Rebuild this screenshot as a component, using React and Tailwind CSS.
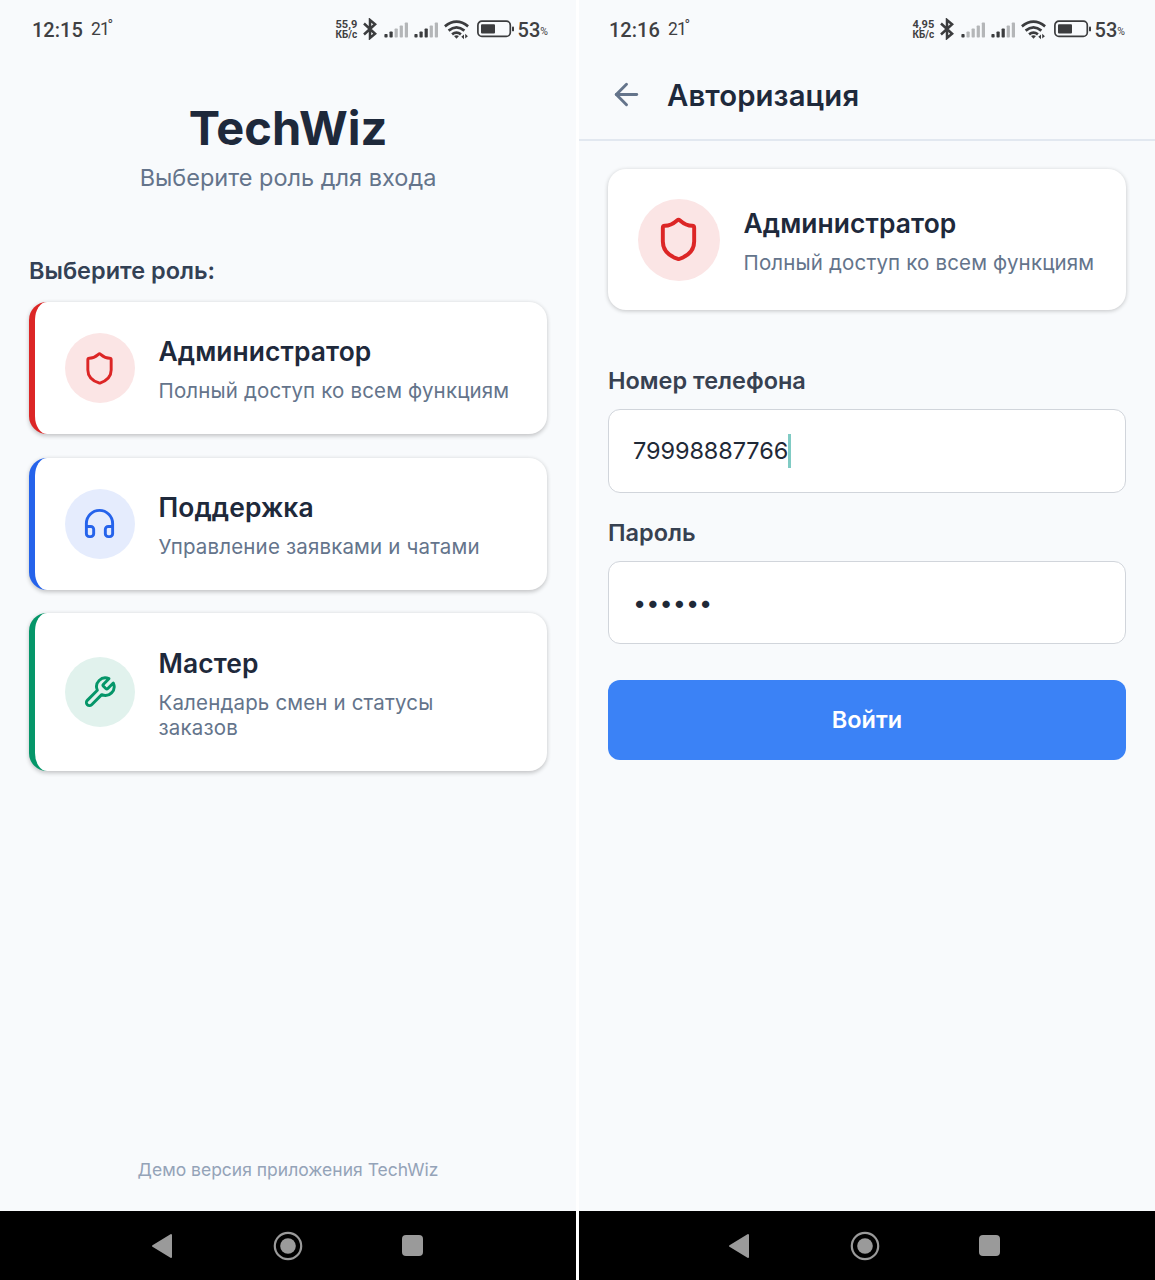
import { ArrowLeft, Headphones, Shield } from "lucide-react";

function Wrench({ size, strokeWidth }) {
  return (
    <svg
      width={size}
      height={size}
      viewBox="0 0 24 24"
      fill="none"
      stroke="currentColor"
      strokeWidth={strokeWidth}
      strokeLinecap="round"
      strokeLinejoin="round"
    >
      <path d="M14.7 6.3a1 1 0 0 0 0 1.4l1.6 1.6a1 1 0 0 0 1.4 0l3.77-3.77a6 6 0 0 1-7.94 7.94l-6.91 6.91a2.12 2.12 0 0 1-3-3l6.91-6.91a6 6 0 0 1 7.94-7.94l-3.76 3.76z" />
    </svg>
  );
}

function Signal({ active }) {
  return (
    <svg width="24" height="16" viewBox="0 0 24 16">
      {[3.5, 6, 9, 12, 15].map((h, i) => (
        <rect
          key={i}
          x={0.4 + i * 5.1}
          y={15.5 - h}
          width="3.2"
          height={h}
          rx="0.8"
          fill={i < active ? "#3b3c3e" : "#b4b6b8"}
        />
      ))}
    </svg>
  );
}

function StatusBar({ time, speed, first, second, inset }) {
  return (
    <div className={`flex h-[59px] shrink-0 items-center justify-between font-[Roboto,sans-serif] text-[#3f4042] ${inset}`}>
      <div className="flex items-center">
        <span className="w-[59px] text-[20px] leading-[24px] font-medium">{time}</span>
        <span className="-mt-[1px] text-[17.5px] leading-[24px] tracking-[-0.8px]">21</span>
        <span className="-mt-[9px] -ml-[1.5px] text-[15px] leading-[24px]">°</span>
      </div>
      <div className="flex items-center">
        <div className="w-[27px] text-[11px] leading-[10px] font-bold whitespace-nowrap">
          <div>{speed}</div>
          <div className="text-[10px]">КБ/с</div>
        </div>
        <svg className="mr-[7px] -mt-[2px]" width="14" height="22" viewBox="0 0 14 22" fill="none" stroke="#3b3c3e" strokeWidth="2.5">
          <path d="M1 5.5 L12.1 15.8 L7 20 V2 L12.1 6.2 L1 16.5" />
        </svg>
        <Signal active={first} />
        <div className="w-[6px]" />
        <Signal active={second} />
        <svg className="ml-[6px]" width="26" height="20" viewBox="0 0 26 20" fill="none" stroke="#3b3c3e" strokeWidth="2.7">
          <path d="M0.9 6.4 Q12.5 -3 24.1 6.4" />
          <path d="M4.6 10.6 Q12.5 4 20.4 10.6" />
          <path d="M8.1 14.4 Q12.5 10.8 16.9 14.4" />
          <path d="M10 16.1 Q12.5 14.3 15 16.1 L12.5 18.8 Z" fill="#3b3c3e" stroke="none" />
          <path d="M20 14.5 V19.3 L17.3 16.8 Z M21.2 13.8 V18.6 L23.9 16.2 Z" fill="#3b3c3e" stroke="none" />
        </svg>
        <svg className="ml-[7px] -mt-[1px]" width="38" height="18" viewBox="0 0 38 18">
          <rect x="0.9" y="1.2" width="32.4" height="15.2" rx="4" fill="none" stroke="#3b3c3e" strokeWidth="1.7" />
          <rect x="4" y="4.2" width="14" height="9.4" rx="1" fill="#3b3c3e" />
          <rect x="35" y="6.5" width="2" height="4.8" rx="0.9" fill="#3b3c3e" />
        </svg>
        <span className="ml-[3px] text-[20px] leading-[24px] font-medium">53</span>
        <span className="mt-[5px] text-[10.5px] leading-[14px]">%</span>
      </div>
    </div>
  );
}

function NavBar({ inset }) {
  return (
    <div className={`flex h-[69px] shrink-0 items-center bg-black ${inset}`}>
      <svg width="22" height="26" viewBox="0 0 22 26">
        <path d="M2 13 L20 2 V24 Z" fill="#9a9a9a" stroke="#9a9a9a" strokeWidth="2" strokeLinejoin="round" />
      </svg>
      <svg className="mr-[99.5px] ml-[99.5px]" width="30" height="30" viewBox="0 0 30 30">
        <circle cx="15" cy="15" r="13.2" fill="none" stroke="#9a9a9a" strokeWidth="2.2" />
        <circle cx="15" cy="15" r="7.8" fill="#9a9a9a" />
      </svg>
      <div className="size-[21px] rounded-[4px] bg-[#9a9a9a]" />
    </div>
  );
}

function RoleText({ title, text }) {
  return (
    <div className="pt-[4px] pb-px">
      <h2 className="text-[26.4px] leading-[32px] font-semibold tracking-[0.1px] text-[#1e293b]">{title}</h2>
      <p className="mt-[11px] text-[20.5px] leading-[25.5px] tracking-[0.16px] text-[#64748b]">{text}</p>
    </div>
  );
}

const roles = [
  {
    title: "Администратор",
    text: "Полный доступ ко всем функциям",
    Icon: Shield,
    border: "border-[#dc2626]",
    badge: "bg-[#fbe5e5] text-[#dc2626]",
    height: "h-[132px]",
  },
  {
    title: "Поддержка",
    text: "Управление заявками и чатами",
    Icon: Headphones,
    border: "border-[#2563eb]",
    badge: "bg-[#e5ecfd] text-[#2563eb]",
    height: "h-[132px]",
  },
  {
    title: "Мастер",
    text: "Календарь смен и статусы заказов",
    Icon: Wrench,
    border: "border-[#059669]",
    badge: "bg-[#e1f2ed] text-[#059669]",
    height: "h-[157.5px]",
  },
];

function RoleScreen() {
  return (
    <section className="flex w-[576px] flex-col bg-[#f8fafc]">
      <StatusBar time="12:15" speed="55,9" first={2} second={3} inset="pr-[28px] pl-[32px]" />
      <main className="flex flex-1 flex-col px-[29px] pt-[40px]">
        <h1 className="text-center text-[47px] leading-[57px] font-bold text-[#1e293b]">TechWiz</h1>
        <p className="mt-[8px] text-center text-[23.5px] leading-[28px] text-[#64748b]">Выберите роль для входа</p>
        <h3 className="mt-[65px] text-[23.5px] leading-[28px] font-semibold text-[#334155]">Выберите роль:</h3>
        <div className="mt-[17px] flex flex-col gap-[23.7px]">
          {roles.map(({ title, text, Icon, border, badge, height }) => (
            <div
              key={title}
              className={`flex items-center rounded-[18px] border-l-[6px] bg-white pr-[35px] pl-[29.5px] shadow-[0_1.5px_4px_rgba(0,0,0,0.22)] ${border} ${height}`}
            >
              <div className={`mr-[24px] flex size-[70px] shrink-0 items-center justify-center rounded-full ${badge}`}>
                <Icon size={35} strokeWidth={2} />
              </div>
              <RoleText title={title} text={text} />
            </div>
          ))}
        </div>
        <p className="mt-auto mb-[30px] text-center text-[17.5px] leading-[22px] text-[#94a3b8]">
          Демо версия приложения TechWiz
        </p>
      </main>
      <NavBar inset="pl-[151px]" />
    </section>
  );
}

function LoginScreen() {
  return (
    <section className="flex w-[576px] flex-col bg-[#f8fafc]">
      <StatusBar time="12:16" speed="4,95" first={1} second={3} inset="pr-[30px] pl-[30px]" />
      <header className="flex h-[82px] shrink-0 items-center border-b-2 border-[#e2e8f0] pb-[7px] pl-[29px]">
        <ArrowLeft size={35} strokeWidth={2} className="-mt-[3px] ml-px text-[#64748b]" />
        <h1 className="ml-[23px] text-[29.3px] leading-[36px] font-semibold tracking-[0.1px] text-[#1e293b]">Авторизация</h1>
      </header>
      <main className="flex flex-1 flex-col px-[29px] pt-[28px]">
        <div className="flex h-[141px] items-center rounded-[18px] bg-white px-[30px] shadow-[0_1px_4px_rgba(0,0,0,0.22)]">
          <div className="mr-[23.5px] flex size-[82px] shrink-0 items-center justify-center rounded-full bg-[#fbe5e5] text-[#dc2626]">
            <Shield size={47} strokeWidth={2} className="-ml-[1px]" />
          </div>
          <RoleText title="Администратор" text="Полный доступ ко всем функциям" />
        </div>
        <h3 className="mt-[57px] text-[23.5px] leading-[28px] font-semibold text-[#374151]">Номер телефона</h3>
        <div className="mt-[14px] flex h-[84px] items-center rounded-[12px] border-[1.5px] border-[#d1d5db] bg-white px-[24px] text-[23.5px] text-[#1f2937]">
          <span className="tracking-[-0.1px]">79998887766</span>
          <span className="-mt-[1px] h-[34px] w-[3px] bg-[#80cbc4]" />
        </div>
        <h3 className="mt-[26px] text-[23.5px] leading-[28px] font-semibold text-[#374151]">Пароль</h3>
        <div className="mt-[14px] flex h-[83px] items-center rounded-[12px] border-[1.5px] border-[#d1d5db] bg-white px-[24px] text-[23.5px] text-[#1f2937]">
          <span>••••••</span>
        </div>
        <button className="mt-[36px] h-[80px] rounded-[12px] bg-[#3b82f6] text-[23.5px] font-semibold text-white">
          Войти
        </button>
      </main>
      <NavBar inset="pl-[149px]" />
    </section>
  );
}

export default function App() {
  return (
    <div className="flex h-[1280px] w-[1155px] justify-between overflow-hidden bg-white font-[Inter,sans-serif]">
      <RoleScreen />
      <LoginScreen />
    </div>
  );
}
